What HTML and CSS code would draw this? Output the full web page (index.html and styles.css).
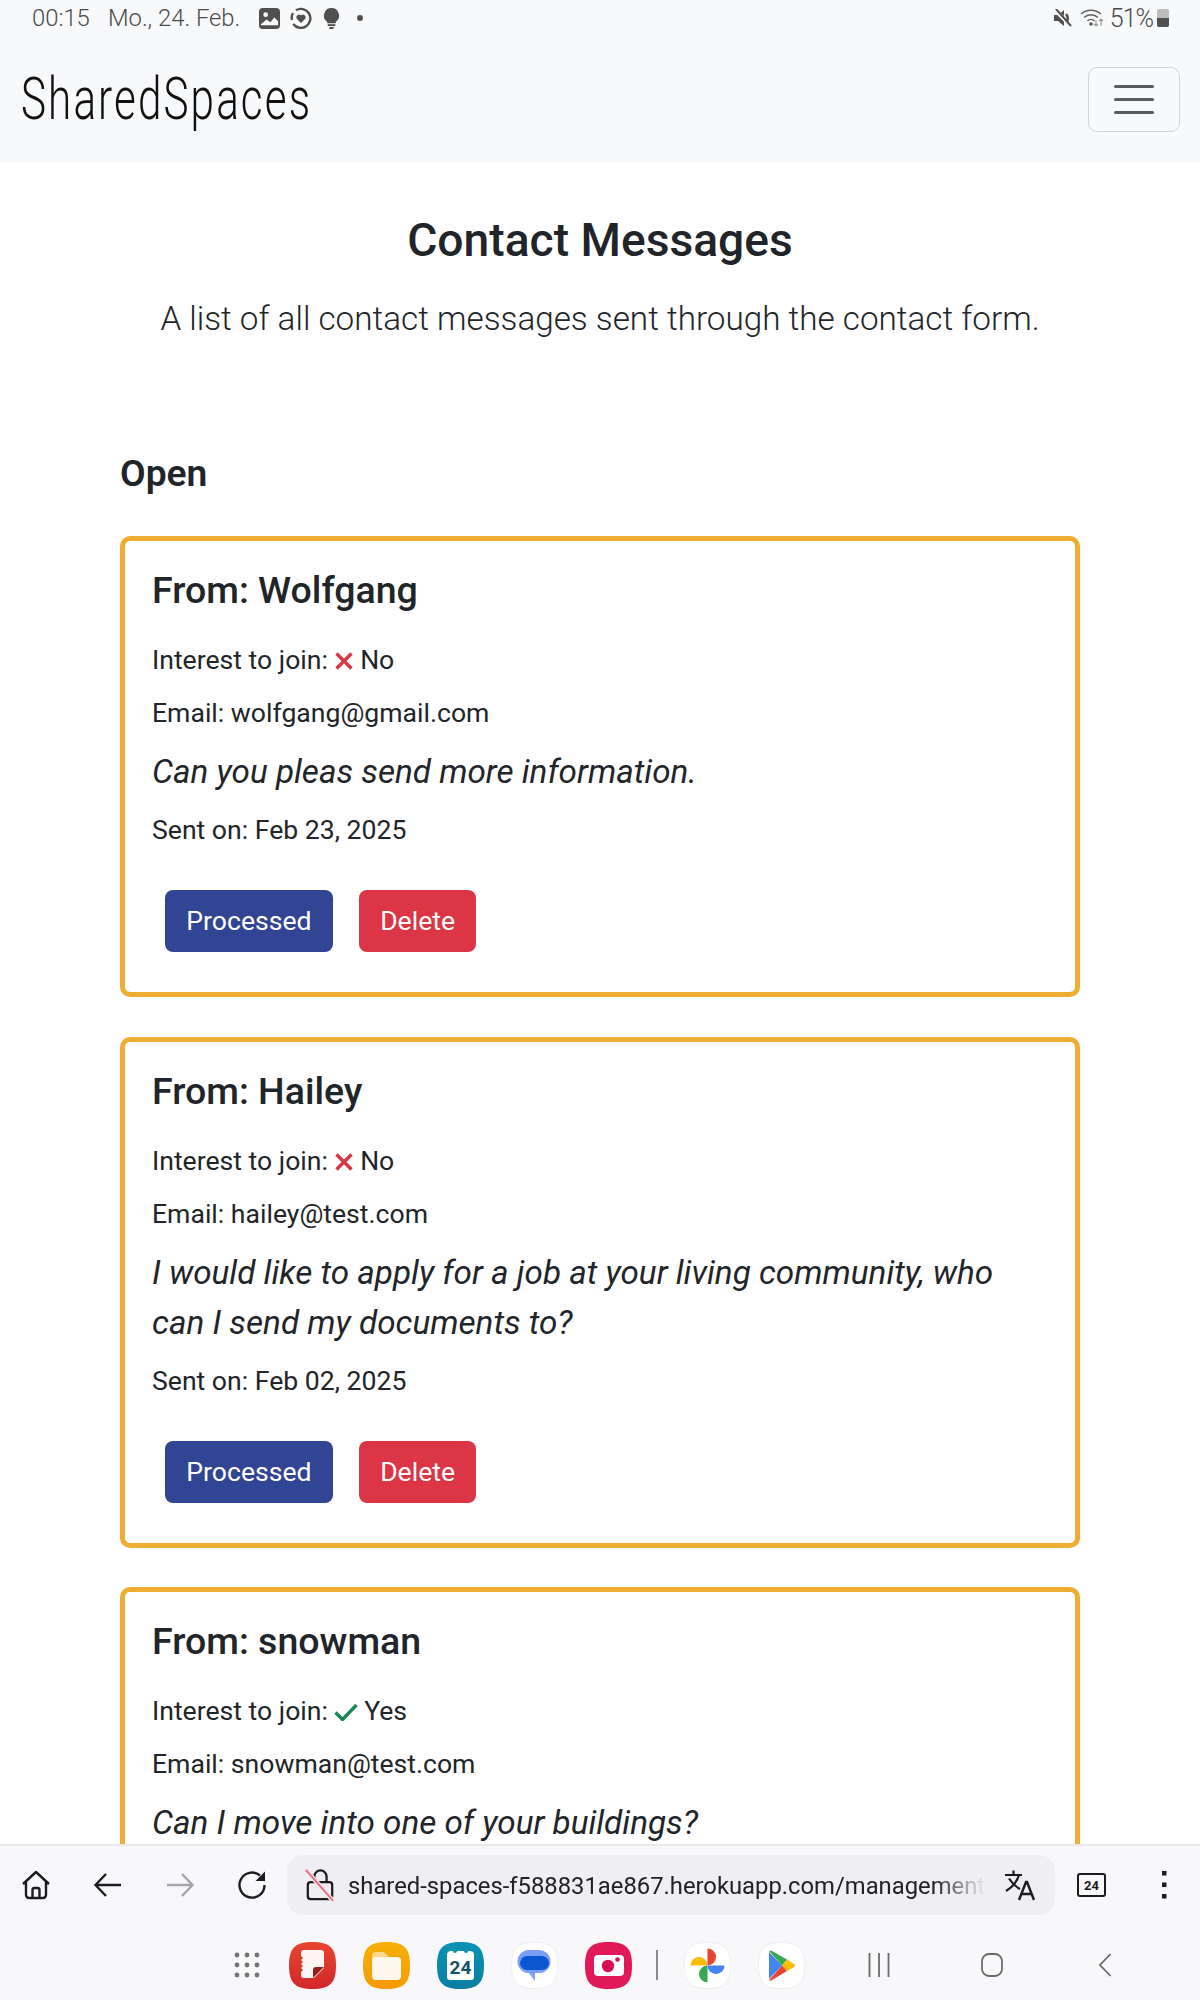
FILE: index.html
```html
<!DOCTYPE html>
<html lang="en">
<head>
<meta charset="utf-8">
<title>SharedSpaces</title>
<link rel="stylesheet" href="styles.css">
</head>
<body>
<div class="screen">
  <header class="top">
    <div class="status">
      <div class="status-left">
        <span class="time">00:15</span>
        <span class="date">Mo., 24. Feb.</span>
        <svg class="si si-img" viewBox="0 0 22 22"><rect width="22" height="22" rx="4" fill="#505050"/><circle cx="7" cy="7" r="2.5" fill="#f8f9fb"/><path d="M2 17l6-5 4 3 4-5 4 4v4H2z" fill="#f8f9fb"/></svg>
        <svg class="si si-heart" viewBox="0 0 22 22"><path d="M6 3.2A9.5 9.5 0 1 1 3.2 17M2 13A9.5 9.5 0 0 1 3 6" fill="none" stroke="#505050" stroke-width="2.4"/><path d="M11 16l-4.300-4.300a2.700 2.700 0 0 1 4.300-3.200 2.700 2.700 0 0 1 4.300 3.200z" fill="#505050"/></svg>
        <svg class="si si-bulb" viewBox="0 0 18 22"><path d="M9 0a8 8 0 0 1 4.500 14.600V16h-9v-1.400A8 8 0 0 1 9 0z" fill="#505050"/><rect x="5" y="17" width="8" height="2" fill="#505050"/><rect x="6.500" y="20" width="5" height="2" rx="1" fill="#505050"/></svg>
        <span class="dot"></span>
      </div>
      <div class="status-right">
        <svg class="si si-mute" viewBox="0 0 18 18"><path d="M0 6h4l6-5v16l-6-5H0z" fill="#505050"/><path d="M1 1l16 16" stroke="#f8f9fb" stroke-width="4"/><path d="M2 0l15 17" stroke="#505050" stroke-width="2"/><path d="M12 5q3 4 1 7" stroke="#505050" stroke-width="2.500" fill="none"/></svg>
        <svg class="si si-wifi" viewBox="0 0 24 20"><g fill="none" stroke="#606060" stroke-width="1.500"><path d="M1 6a15 15 0 0 1 20 0"/><path d="M4 9.500a10 10 0 0 1 14 0"/><path d="M7.500 13a5 5 0 0 1 7 0"/></g><circle cx="11" cy="16" r="1.700" fill="#505050"/><path d="M16 12v6m-2-2l2 2 2-2" stroke="#999" stroke-width="1.200" fill="none"/><path d="M21 18v-7m-2 2l2-2 2 2" stroke="#999" stroke-width="1.200" fill="none"/></svg>
        <span class="batt-text">51%</span>
        <span class="battery"><span class="battery-fill"></span></span>
      </div>
    </div>
    <nav class="navbar">
      <a class="brand"><span class="brand-text">SharedSpaces</span></a>
      <button class="toggler" aria-label="Toggle navigation"><span class="bar"></span><span class="bar"></span><span class="bar"></span></button>
    </nav>
  </header>

  <main class="content">
    <h1 class="title">Contact Messages</h1>
    <p class="lead">A list of all contact messages sent through the contact form.</p>
    <h2 class="section">Open</h2>

    <article class="card">
      <h3 class="from">From: Wolfgang</h3>
      <p class="line">Interest to join: <svg class="mark" viewBox="0 0 20 20"><path d="M2.500 2.500l15 15m0-15l-15 15" stroke="#dc3545" stroke-width="3.400"/></svg> No</p>
      <p class="line">Email: wolfgang@gmail.com</p>
      <p class="msg">Can you pleas send more information.</p>
      <p class="line">Sent on: Feb 23, 2025</p>
      <div class="actions"><button class="btn btn-blue">Processed</button><button class="btn btn-red">Delete</button></div>
    </article>

    <article class="card">
      <h3 class="from">From: Hailey</h3>
      <p class="line">Interest to join: <svg class="mark" viewBox="0 0 20 20"><path d="M2.500 2.500l15 15m0-15l-15 15" stroke="#dc3545" stroke-width="3.400"/></svg> No</p>
      <p class="line">Email: hailey@test.com</p>
      <p class="msg">I would like to apply for a job at your living community, who can I send my documents to?</p>
      <p class="line">Sent on: Feb 02, 2025</p>
      <div class="actions"><button class="btn btn-blue">Processed</button><button class="btn btn-red">Delete</button></div>
    </article>

    <article class="card card-cut">
      <h3 class="from">From: snowman</h3>
      <p class="line">Interest to join: <svg class="mark mark-check" viewBox="0 0 24 18"><path d="M1.500 9.500l7 7L22.500 2" fill="none" stroke="#198754" stroke-width="3.400"/></svg> Yes</p>
      <p class="line">Email: snowman@test.com</p>
      <p class="msg">Can I move into one of your buildings?</p>
    </article>
  </main>

  <footer class="bottom">
    <div class="toolbar">
      <svg class="tool" viewBox="0 0 32 32"><path d="M3 15L16 3l13 12M6 12.500V26a3 3 0 0 0 3 3h14a3 3 0 0 0 3-3V12.500M12.500 29v-8a2 2 0 0 1 2-2h3a2 2 0 0 1 2 2v8" fill="none" stroke="#1c1c1e" stroke-width="2.400" stroke-linejoin="round"/></svg>
      <svg class="tool" viewBox="0 0 32 32"><path d="M29 16H4M14 5L3.500 16 14 27" fill="none" stroke="#1c1c1e" stroke-width="2.400"/></svg>
      <svg class="tool" viewBox="0 0 32 32"><path d="M3 16h25M18 5l10.500 11L18 27" fill="none" stroke="#a5a5a7" stroke-width="2.400"/></svg>
      <svg class="tool" viewBox="0 0 32 32"><path d="M28.500 16A12.500 12.500 0 1 1 24 6.500" fill="none" stroke="#1c1c1e" stroke-width="2.400"/><path d="M29 2.500V12H19.500z" fill="#1c1c1e"/></svg>
      <div class="address">
        <svg class="lock" viewBox="0 0 32 36"><path d="M10 15V9a6.500 6.500 0 0 1 13 0v6" fill="none" stroke="#1c1c1e" stroke-width="2.400"/><rect x="3" y="15" width="26" height="18" rx="3" fill="none" stroke="#1c1c1e" stroke-width="2.400"/><path d="M1 2l29 33" stroke="#eeeef3" stroke-width="5"/><path d="M1 2l29 33" stroke="#f0707f" stroke-width="2.200"/></svg>
        <span class="url">shared-spaces-f588831ae867.herokuapp.com/management</span>
        <svg class="translate" viewBox="0 0 32 32"><path d="M1 6h17M9.500 1.500V6M15 6Q12 16 2 22M5 9.500Q9 16 16 20" fill="none" stroke="#1c1c1e" stroke-width="2.200"/><path d="M15 31l7-18h1l7 18M17.500 25h10" fill="none" stroke="#1c1c1e" stroke-width="2.400"/></svg>
      </div>
      <span class="tabs">24</span>
      <svg class="more" viewBox="0 0 6 28"><rect x="1" y="0" width="4.500" height="4.500" fill="#1c1c1e"/><rect x="1" y="11.500" width="4.500" height="4.500" fill="#1c1c1e"/><rect x="1" y="23" width="4.500" height="4.500" fill="#1c1c1e"/></svg>
    </div>
    <div class="dock">
      <svg class="apps" viewBox="0 0 26 26"><g fill="#757575"><circle cx="3" cy="3" r="2.400"/><circle cx="13" cy="3" r="2.400"/><circle cx="23" cy="3" r="2.400"/><circle cx="3" cy="13" r="2.400"/><circle cx="13" cy="13" r="2.400"/><circle cx="23" cy="13" r="2.400"/><circle cx="3" cy="23" r="2.400"/><circle cx="13" cy="23" r="2.400"/><circle cx="23" cy="23" r="2.400"/></g></svg>

      <svg class="app" viewBox="0 0 47 47"><defs><linearGradient id="gn" x1="0" y1="0" x2="0" y2="1"><stop offset="0" stop-color="#e8452f"/><stop offset="1" stop-color="#d2262a"/></linearGradient></defs><path d="M23.500 0C41 0 47 6 47 23.500S41 47 23.500 47 0 41 0 23.500 6 0 23.500 0Z" fill="url(#gn)"/><path d="M12 11a3 3 0 0 1 3-3h17a3 3 0 0 1 3 3v15l-10 10H15a3 3 0 0 1-3-3v-3l2-2-2-2 2-2-2-2 2-2-2-2 2-2-2-2z" fill="#faf5f2"/><path d="M35 25l-11 11v-8a3 3 0 0 1 3-3z" fill="#96201f"/></svg>

      <svg class="app" viewBox="0 0 47 47"><defs><linearGradient id="gf" x1="0" y1="0" x2="0" y2="1"><stop offset="0" stop-color="#f6b107"/><stop offset="1" stop-color="#f79a05"/></linearGradient></defs><path d="M23.500 0C41 0 47 6 47 23.500S41 47 23.500 47 0 41 0 23.500 6 0 23.500 0Z" fill="url(#gf)"/><path d="M9 14a4 4 0 0 1 4-4h8l5 5v6H9z" fill="#fbd98a"/><rect x="9" y="15" width="29" height="23" rx="4" fill="#fff8ec"/></svg>

      <svg class="app" viewBox="0 0 47 47"><defs><linearGradient id="gc" x1="0" y1="0" x2="0" y2="1"><stop offset="0" stop-color="#0b93b3"/><stop offset="1" stop-color="#0a7ea4"/></linearGradient></defs><path d="M23.500 0C41 0 47 6 47 23.500S41 47 23.500 47 0 41 0 23.500 6 0 23.500 0Z" fill="url(#gc)"/><path d="M10 13a4 4 0 0 1 4-4h19a4 4 0 0 1 4 4v22a3 3 0 0 1-3 3H13a3 3 0 0 1-3-3z" fill="#fff"/><circle cx="18" cy="9" r="2" fill="#0b93b3"/><circle cx="29" cy="9" r="2" fill="#0b93b3"/><text x="23.500" y="32" text-anchor="middle" class="cal-num">24</text></svg>

      <svg class="app" viewBox="0 0 47 47"><path d="M23.500.5C40.500.500 46.500 6.500 46.500 23.500S40.500 46.500 23.500 46.500.500 40.500.500 23.500 6.500.500 23.500.500Z" fill="#fff" stroke="#eeeef2"/><path d="M18 8h10a11.500 11.500 0 0 1 0 23h-4v8l-6-8A11.500 11.500 0 0 1 18 8z" fill="#7b9ff5"/><rect x="9" y="14" width="29" height="14" rx="7" fill="#0b57d0"/></svg>

      <svg class="app" viewBox="0 0 47 47"><path d="M23.500 0C41 0 47 6 47 23.500S41 47 23.500 47 0 41 0 23.500 6 0 23.500 0Z" fill="#e1195a"/><rect x="9" y="13" width="30" height="21" rx="4" fill="#fff"/><circle cx="23" cy="24" r="6.200" fill="#d90f55"/><circle cx="32.500" cy="17.500" r="2.300" fill="#d90f55"/></svg>

      <span class="divider"></span>

      <svg class="app" viewBox="0 0 47 47"><path d="M23.500.5C40.500.500 46.500 6.500 46.500 23.500S40.500 46.500 23.500 46.500.500 40.500.500 23.500 6.500.500 23.500.500Z" fill="#fff" stroke="#eeeef2"/><path d="M23.500 23.500V6.500a8.500 8.500 0 0 1 0 17z" fill="#ea4335"/><path d="M23.500 23.500H40.500a8.500 8.500 0 0 1-17 0z" fill="#4285f4"/><path d="M23.500 23.500V40.500a8.500 8.500 0 0 1 0-17z" fill="#34a853"/><path d="M23.500 23.500H6.500a8.500 8.500 0 0 1 17 0z" fill="#fbbc04"/></svg>

      <svg class="app" viewBox="0 0 47 47"><path d="M23.500.5C40.500.500 46.500 6.500 46.500 23.500S40.500 46.500 23.500 46.500.500 40.500.500 23.500 6.500.500 23.500.500Z" fill="#fff" stroke="#eeeef2"/><path d="M11 10v27l13-13.500z" fill="#4285f4"/><path d="M11 9q1-1 3 0l15 8.500-5 6z" fill="#34a853"/><path d="M29 17.500l7 4.500q2 1.500 0 3l-7 4-5-5.500z" fill="#fbbc04"/><path d="M11 38q1 1 3 0l15-9-5-5.500z" fill="#ea4335"/></svg>

      <svg class="nav-btn nav-recents" viewBox="0 0 22 24"><path d="M1.500 0v24M11 0v24M20.500 0v24" stroke="#6a6a6a" stroke-width="1.800"/></svg>
      <svg class="nav-btn nav-home" viewBox="0 0 22 24"><rect x="1" y="1" width="20" height="22" rx="7" fill="none" stroke="#6a6a6a" stroke-width="1.800"/></svg>
      <svg class="nav-btn nav-back" viewBox="0 0 14 24"><path d="M12.500 1L2 12l10.500 11" fill="none" stroke="#6a6a6a" stroke-width="1.800"/></svg>
    </div>
  </footer>
</div>
</body>
</html>
```

FILE: styles.css
```css
* { box-sizing: border-box; }
html, body { margin: 0; padding: 0; }
body { font-family: Roboto, "Liberation Sans", sans-serif; color: #212529; background: #fff; }
.screen { width: 1200px; height: 2000px; display: flex; flex-direction: column; overflow: hidden; }

.top { background: #f8f9fb; height: 163px; flex: none; }
.status { height: 36px; display: flex; justify-content: space-between; align-items: center; padding: 0 31px 0 32px; color: #4a4a4a; font-size: 23.8px; font-weight: 300; }
.status-left, .status-right { display: flex; align-items: center; }
.time { width: 76px; }
.date { width: 151px; }
.si { display: block; flex: none; }
.si-img { width: 21px; height: 21px; }
.si-heart { width: 22px; height: 22px; margin-left: 10px; }
.si-bulb { width: 17px; height: 21px; margin-left: 11px; }
.dot { width: 6px; height: 6px; border-radius: 50%; background: #505050; margin-left: 17px; }
.si-mute { width: 18px; height: 18px; }
.si-wifi { width: 24px; height: 20px; margin-left: 8px; }
.batt-text { margin-left: 6px; font-size: 25px; letter-spacing: -1px; }
.battery { width: 12px; height: 18px; margin-left: 4px; background: #bdbdbd; border-radius: 2px; display: flex; align-items: flex-end; overflow: hidden; }
.battery-fill { width: 100%; height: 9px; background: #505050; }

.navbar { height: 127px; display: flex; justify-content: space-between; align-items: center; padding: 0 20px 0 21px; }
.brand { display: block; height: 70px; margin-top: -2px; }
.brand-text { display: block; font-size: 60px; line-height: 70px; font-weight: 300; letter-spacing: 3px; color: #111; transform: scaleX(0.703); transform-origin: left center; white-space: nowrap; }
.toggler { width: 92px; height: 65px; background: transparent; border: 1px solid #d2d3d5; border-radius: 9px; display: flex; flex-direction: column; align-items: center; justify-content: center; gap: 10px; padding: 0; }
.bar { display: block; width: 40px; height: 3px; border-radius: 2px; background: #5a5c60; }

.content { flex: 1; min-height: 0; overflow: hidden; padding: 52px 120px 0; }
.title { margin: 0; text-align: center; font-size: 46.2px; line-height: 50px; font-weight: 500; }
.lead { margin: 29px 0 0; text-align: center; font-size: 33.25px; line-height: 50px; font-weight: 300; }
.section { margin: 107px 0 0; font-size: 37.2px; line-height: 45px; font-weight: 600; }

.card { border: 5px solid #f0ad33; border-radius: 10px; padding: 27px 27px 40px; margin-top: 40px; }
.card + .card { margin-top: 39.5px; }
.card-cut { min-height: 500px; }
.from { margin: 0; font-size: 37.5px; line-height: 45px; font-weight: 500; }
.line { margin: 0; font-size: 26.6px; line-height: 40px; }
.from + .line { margin-top: 27px; }
.line + .line { margin-top: 13px; }
.mark { display: inline-block; width: 20px; height: 20px; vertical-align: -2px; margin: 0 0 0 -1px; }
.mark-check { width: 24px; height: 18px; vertical-align: -1px; }
.msg { margin: 14px 0 13px; font-size: 33.25px; line-height: 50px; font-style: italic; font-weight: 400; }
.actions { display: flex; gap: 26px; padding: 40px 0 0 13px; }
.btn { font-family: inherit; font-size: 26.6px; line-height: 40px; height: 62px; border: 0; border-radius: 8px; padding: 0 21.300px; color: #fff; }
.btn-blue { background: #324494; }
.btn-red { background: #dc3545; }

.bottom { flex: none; height: 156px; background: #f8f8fb; border-top: 2px solid #e9e9eb; }
.toolbar { height: 84px; display: flex; align-items: center; padding: 0 0 6px 20px; }
.tool { width: 32px; height: 32px; flex: none; margin-right: 40px; }
.address { width: 768px; height: 60px; margin-left: -21px; background: #eeeef3; border-radius: 16px; display: flex; align-items: center; padding-left: 18px; flex: none; }
.lock { width: 30px; height: 34px; flex: none; }
.url { margin-left: 13px; padding-top: 2px; font-size: 23.8px; width: 637px; line-height: 36px; white-space: nowrap; overflow: hidden; color: #222; -webkit-mask-image: linear-gradient(to right, #000 92%, transparent 100%); mask-image: linear-gradient(to right, #000 92%, transparent 100%); }
.translate { width: 32px; height: 32px; flex: none; margin-left: 19px; }
.tabs { width: 29px; height: 24px; margin-left: 22px; border: 2.500px solid #1c1c1e; border-radius: 3px; font-size: 13px; font-weight: 700; color: #1c1c1e; display: flex; align-items: center; justify-content: center; flex: none; }
.more { width: 6px; height: 28px; margin-left: 55px; flex: none; }

.dock { height: 70px; display: flex; align-items: center; padding-left: 234px; }
.apps { width: 26px; height: 26px; flex: none; margin-right: 29px; }
.app { width: 47px; height: 47px; flex: none; margin-right: 27px; }
.cal-num { font-family: Roboto, "Liberation Sans", sans-serif; font-size: 19px; font-weight: 700; fill: #17506f; }
.divider { width: 2px; height: 30px; background: #8a8a8a; margin: 0 26px 0 -3px; flex: none; }
.nav-btn { flex: none; height: 24px; }
.nav-recents { width: 22px; margin-left: 36px; }
.nav-home { width: 22px; margin-left: 91px; }
.nav-back { width: 14px; margin-left: 95px; }
```
